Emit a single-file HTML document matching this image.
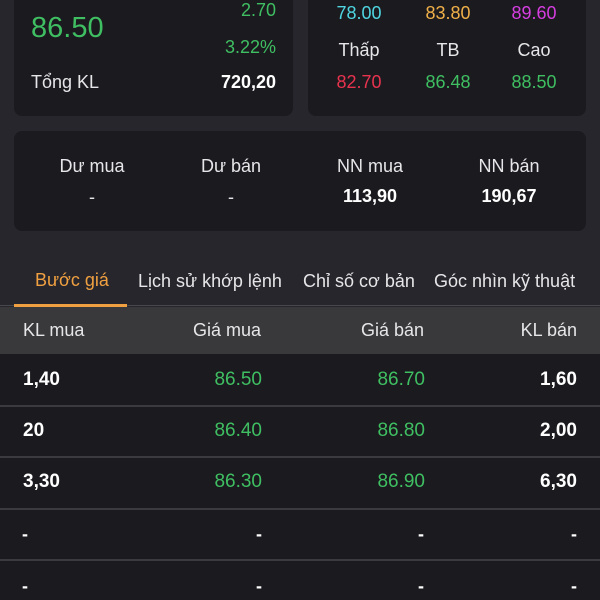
<!DOCTYPE html>
<html><head><meta charset="utf-8"><style>
*{margin:0;padding:0;box-sizing:border-box}
body{width:600px;height:600px;overflow:hidden;background:#27262c;font-family:"Liberation Sans",sans-serif;color:#e6e6e8;position:relative}
.a{position:absolute;white-space:nowrap}
.card{position:absolute;background:#1b1a1f;border-radius:8px}
.g{color:#3fbf62}.w{color:#fff}
.c{transform:translateX(-50%)}
.r{transform:translateX(-100%)}
.f17{font-size:18px}.f18{font-size:19px}
.row{position:absolute;left:0;width:600px;background:#1b1a1f}
.sep{position:absolute;left:0;width:600px;height:2px;background:#3b3a3f}
</style></head><body>
<div class="card" style="left:14px;top:-10px;width:279px;height:126px"></div>
<div class="card" style="left:308px;top:-10px;width:278px;height:126px"></div>
<div class="card" style="left:14px;top:131px;width:572px;height:100px"></div>

<div class="a g" style="left:31px;top:12px;font-size:29px">86.50</div>
<div class="a g f17 r" style="left:276px;top:0px">2.70</div>
<div class="a g f17 r" style="left:276px;top:37px">3.22%</div>
<div class="a f17" style="left:31px;top:72px">Tổng KL</div>
<div class="a w f17 r" style="left:276px;top:72px;font-weight:bold">720,20</div>

<div class="a f17 c" style="left:359px;top:3px;color:#4fd6e0">78.00</div>
<div class="a f17 c" style="left:448px;top:3px;color:#f0b048">83.80</div>
<div class="a f17 c" style="left:534px;top:3px;color:#d63ee0">89.60</div>
<div class="a f17 c" style="left:359px;top:40px">Thấp</div>
<div class="a f17 c" style="left:448px;top:40px">TB</div>
<div class="a f17 c" style="left:534px;top:40px">Cao</div>
<div class="a f17 c" style="left:359px;top:72px;color:#e8334f">82.70</div>
<div class="a g f17 c" style="left:448px;top:72px">86.48</div>
<div class="a g f17 c" style="left:534px;top:72px">88.50</div>

<div class="a f17 c" style="left:92px;top:156px">Dư mua</div>
<div class="a f17 c" style="left:231px;top:156px">Dư bán</div>
<div class="a f17 c" style="left:370px;top:156px">NN mua</div>
<div class="a f17 c" style="left:509px;top:156px">NN bán</div>
<div class="a f17 c" style="left:92px;top:187px">-</div>
<div class="a f17 c" style="left:231px;top:187px">-</div>
<div class="a w f17 c" style="left:370px;top:186px;font-weight:bold">113,90</div>
<div class="a w f17 c" style="left:509px;top:186px;font-weight:bold">190,67</div>

<div class="a f17" style="left:35px;top:270px;color:#f0a040">Bước giá</div>
<div class="a f17" style="left:138px;top:271px">Lịch sử khớp lệnh</div>
<div class="a f17" style="left:303px;top:271px">Chỉ số cơ bản</div>
<div class="a f17" style="left:434px;top:271px">Góc nhìn kỹ thuật</div>
<div class="a" style="left:0;top:305px;width:600px;height:1px;background:#48474c"></div>
<div class="a" style="left:14px;top:304px;width:113px;height:3px;background:#f0a040"></div>
<div class="a" style="left:0;top:307px;width:600px;height:47px;background:#39393c"></div>
<div class="a f17" style="left:23px;top:320px">KL mua</div>
<div class="a f17 r" style="left:261px;top:320px">Giá mua</div>
<div class="a f17 r" style="left:424px;top:320px">Giá bán</div>
<div class="a f17 r" style="left:577px;top:320px">KL bán</div>

<div class="row" style="top:354px;height:246px"></div>
<div class="sep" style="top:405px"></div>
<div class="sep" style="top:456px"></div>
<div class="sep" style="top:508px"></div>
<div class="sep" style="top:559px"></div>

<div class="a w f18" style="left:23px;top:369px;font-weight:bold">1,40</div>
<div class="a g f18 r" style="left:262px;top:369px">86.50</div>
<div class="a g f18 r" style="left:425px;top:369px">86.70</div>
<div class="a w f18 r" style="left:577px;top:369px;font-weight:bold">1,60</div>

<div class="a w f18" style="left:23px;top:420px;font-weight:bold">20</div>
<div class="a g f18 r" style="left:262px;top:420px">86.40</div>
<div class="a g f18 r" style="left:425px;top:420px">86.80</div>
<div class="a w f18 r" style="left:577px;top:420px;font-weight:bold">2,00</div>

<div class="a w f18" style="left:23px;top:471px;font-weight:bold">3,30</div>
<div class="a g f18 r" style="left:262px;top:471px">86.30</div>
<div class="a g f18 r" style="left:425px;top:471px">86.90</div>
<div class="a w f18 r" style="left:577px;top:471px;font-weight:bold">6,30</div>

<div class="a w f17" style="left:22px;top:524px;font-weight:bold">-</div>
<div class="a w f17 r" style="left:262px;top:524px;font-weight:bold">-</div>
<div class="a w f17 r" style="left:424px;top:524px;font-weight:bold">-</div>
<div class="a w f17 r" style="left:577px;top:524px;font-weight:bold">-</div>

<div class="a w f17" style="left:22px;top:576px;font-weight:bold">-</div>
<div class="a w f17 r" style="left:262px;top:576px;font-weight:bold">-</div>
<div class="a w f17 r" style="left:424px;top:576px;font-weight:bold">-</div>
<div class="a w f17 r" style="left:577px;top:576px;font-weight:bold">-</div>
</body></html>
